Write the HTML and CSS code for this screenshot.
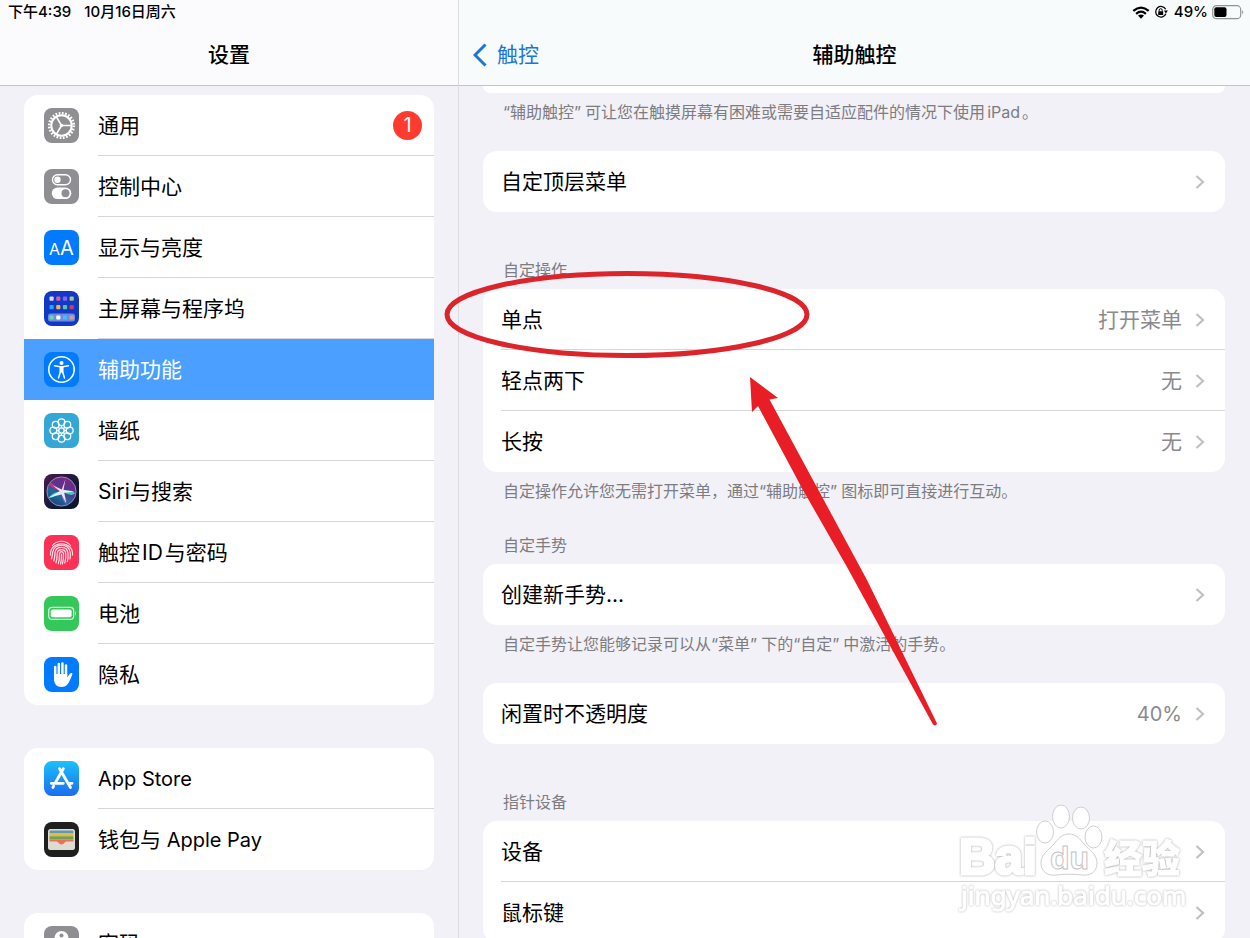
FILE: index.html
```html
<!DOCTYPE html>
<html lang="zh-CN">
<head>
<meta charset="utf-8">
<meta name="viewport" content="width=device-width, initial-scale=1">
<title>设置</title>
<link rel="stylesheet" href="styles.css">
</head>
<body>
<svg class="defs" aria-hidden="true">
  <symbol id="chevron" viewBox="0 0 10 16"><path d="M1.500 2 8 8l-6.500 6" fill="none" stroke="currentColor" stroke-width="2.200"/></symbol>
</svg>
<div class="app">
  <aside class="sidebar">
    <header class="bar">
      <div class="status"><span>下午4:39</span><span>10月16日周六</span></div>
      <div class="titlebar"><h1 class="title">设置</h1></div>
    </header>
    <nav class="side-scroll">
      <ul class="card">
        <li><a class="item" href="#"><svg class="icon" viewBox="0 0 35 35"><rect width="35" height="35" rx="8" fill="#8e8e93"/><g fill="none" stroke="#fff"><circle cx="17.500" cy="17.500" r="12.300" stroke-width="2.600" stroke-dasharray="1.720 1.500"/><circle cx="17.500" cy="17.500" r="10.200" stroke-width="2"/><path d="M17.500 17.500H27M17.500 17.500 12.500 9M17.500 17.500 12.500 26" stroke-width="1.500"/></g><circle cx="17.500" cy="17.500" r="1.800" fill="#fff"/></svg><span class="label">通用</span><span class="badge">1</span></a></li>
        <li><a class="item" href="#"><svg class="icon" viewBox="0 0 35 35"><rect width="35" height="35" rx="8" fill="#8e8e93"/><rect x="8.500" y="5.700" width="18" height="10" rx="5" fill="none" stroke="#fff" stroke-width="1.400"/><circle cx="13.500" cy="10.700" r="3.200" fill="#fff"/><rect x="7.800" y="18.600" width="19.500" height="11.500" rx="5.750" fill="#fff"/><circle cx="21.500" cy="24.300" r="4" fill="#8e8e93"/></svg><span class="label">控制中心</span></a></li>
        <li><a class="item" href="#"><svg class="icon" viewBox="0 0 35 35"><rect width="35" height="35" rx="8" fill="#007aff"/><text x="5" y="25" class="aa-small">A</text><text x="16" y="25" class="aa-large">A</text></svg><span class="label">显示与亮度</span></a></li>
        <li><a class="item" href="#"><svg class="icon" viewBox="0 0 35 35"><rect width="35" height="35" rx="8" fill="#1238c8"/><rect x="4" y="22.500" width="27" height="8" rx="2.500" fill="#6e8ce0"/><g><rect x="5.500" y="5.500" width="4.200" height="4.200" rx="1" fill="#dcdcf5"/><rect x="12.200" y="5.500" width="4.200" height="4.200" rx="1" fill="#e05a94"/><rect x="18.900" y="5.500" width="4.200" height="4.200" rx="1" fill="#8a62f0"/><rect x="25.600" y="5.500" width="4.200" height="4.200" rx="1" fill="#a6c77e"/><rect x="5.500" y="14" width="4.200" height="4.200" rx="1" fill="#20a8f5"/><rect x="12.200" y="14" width="4.200" height="4.200" rx="1" fill="#f2b53a"/><rect x="18.900" y="14" width="4.200" height="4.200" rx="1" fill="#4ec6ad"/><rect x="25.600" y="14" width="4.200" height="4.200" rx="1" fill="#d93a55"/><rect x="5.500" y="24.400" width="4.200" height="4.200" rx="1" fill="#65dca2"/><rect x="12.200" y="24.400" width="4.200" height="4.200" rx="1" fill="#fff"/><rect x="18.900" y="24.400" width="4.200" height="4.200" rx="1" fill="#45bdf5"/><rect x="25.600" y="24.400" width="4.200" height="4.200" rx="1" fill="#dc9c8e"/></g></svg><span class="label">主屏幕与程序坞</span></a></li>
        <li><a class="item item-active" href="#" aria-current="page"><svg class="icon" viewBox="0 0 35 35"><rect width="35" height="35" rx="8" fill="#007aff"/><circle cx="17.500" cy="17.500" r="12.700" fill="none" stroke="#fff" stroke-width="1.600"/><circle cx="17.500" cy="11" r="2" fill="#fff"/><path d="M10.500 13.700 17.500 14.900 24.500 13.700M16.500 19.500 14.500 26M18.500 19.500 20.500 26" fill="none" stroke="#fff" stroke-width="1.500" stroke-linecap="round"/><path d="M15.500 14.500h4v6h-4z" fill="#fff"/></svg><span class="label">辅助功能</span></a></li>
        <li><a class="item" href="#"><svg class="icon" viewBox="0 0 35 35"><rect width="35" height="35" rx="8" fill="#35a7d7"/><g fill="none" stroke="#fff" stroke-width="1.300"><circle cx="17.500" cy="17.500" r="2.700"/><circle cx="17.500" cy="9.300" r="3.400"/><circle cx="23.300" cy="11.700" r="3.400"/><circle cx="25.700" cy="17.500" r="3.400"/><circle cx="23.300" cy="23.300" r="3.400"/><circle cx="17.500" cy="25.700" r="3.400"/><circle cx="11.700" cy="23.300" r="3.400"/><circle cx="9.300" cy="17.500" r="3.400"/><circle cx="11.700" cy="11.700" r="3.400"/><path d="M17.500 12.700v2.100M17.500 20.200v2.100M12.700 17.500h2.100M20.200 17.500h2.100M14.100 14.100l1.500 1.500M19.400 19.400l1.500 1.500M20.900 14.100l-1.500 1.500M15.600 19.400l-1.500 1.500"/></g></svg><span class="label">墙纸</span></a></li>
        <li><a class="item" href="#"><svg class="icon" viewBox="0 0 35 35"><defs><linearGradient id="siri-bg" x2="1" y2="1"><stop offset="0" stop-color="#4c1a4e"/><stop offset=".5" stop-color="#191b3c"/><stop offset="1" stop-color="#0b1030"/></linearGradient><linearGradient id="siri-orb" x1=".8" y1="0" x2=".2" y2="1"><stop offset="0" stop-color="#8a2080"/><stop offset=".4" stop-color="#57348f"/><stop offset=".65" stop-color="#1f6a9c"/><stop offset="1" stop-color="#183f72"/></linearGradient></defs><rect width="35" height="35" rx="8" fill="url(#siri-bg)"/><circle cx="17.500" cy="17.500" r="14.600" fill="url(#siri-orb)" stroke="#a9a4c8" stroke-width=".8"/><path d="M17.500 17.500C9 9 6 7 5 10c2 4 8 6 12.500 7.500z" fill="#e52e6c" opacity=".8"/><path d="M18 17c7-1 11-1 13 2-3 4-8 1-13-2z" fill="#41c9bb"/><path d="M17 17.500C9 18 6 22 4.500 24 9 24 13 21 17 17.500z" fill="#47d8e4"/><path d="M18 17c4 6 5 9 4.500 13-4-2-5-8-4.500-13z" fill="#8a5fd6"/><path d="M21.500 5 19.500 15.800 30 17.800 20.300 18.800 22 29 17.500 20.500 5 23.500 15.800 17.200 9 11.500 17.800 15.500z" fill="#fff" opacity=".85"/></svg><span class="label">Siri与搜索</span></a></li>
        <li><a class="item" href="#"><svg class="icon" viewBox="0 0 35 35"><rect width="35" height="35" rx="8" fill="#fc3158"/><g fill="none" stroke="#ffe4e9" stroke-width="1.200" stroke-linecap="round"><path d="M8.500 10.500C13 4.800 22 4.800 26.500 10.500"/><path d="M6.500 20C5.500 5 29.500 5 28.500 20"/><path d="M7.500 24C8 21 8.500 20 8.600 17.500 9.500 7.500 25.500 7.500 26.300 18 26.400 20 26.400 22 26 24"/><path d="M9.800 26C11 22 10.800 20 11 17.500 12 10.500 23 10.500 24 18 24.200 21 24 24 23.400 26.500"/><path d="M12 27.700C13.300 24 13 21 13.300 18 14 13.500 21 13.500 21.700 18 22 22 21.700 25 20.800 28"/><path d="M14.300 28.600C15.600 25 15.400 22 15.500 18.500 16 16 19 16 19.500 18.500 19.700 22 19.400 26 18.400 29"/><path d="M17.500 19C17.600 23 17.500 26 16.500 29"/></g></svg><span class="label">触控<span class="inline-latin">ID</span>与密码</span></a></li>
        <li><a class="item" href="#"><svg class="icon" viewBox="0 0 35 35"><rect width="35" height="35" rx="8" fill="#34c759"/><rect x="4.700" y="11.400" width="25" height="12" rx="3.500" fill="none" stroke="#d8f5df" stroke-width="1.200"/><rect x="6.800" y="13.500" width="20.800" height="7.800" rx="1.800" fill="#fff"/><path d="M31 15.300q2 2.100 0 4.200z" fill="#d8f5df"/></svg><span class="label">电池</span></a></li>
        <li><a class="item" href="#"><svg class="icon" viewBox="0 0 35 35"><rect width="35" height="35" rx="8" fill="#007aff"/><g fill="none" stroke="#fff" stroke-width="2.500" stroke-linecap="round"><path d="M11.200 20V10M14.800 18V7M18.400 18V6.500M22 19V8.500"/></g><path d="M10 17h13.200v3.500c1.200-1.300 2-3.500 3.400-4.200 1-.6 2.200 0 1.700 1.200-1.200 3-2.300 6-3.800 8.600-2 3-4.300 4-7 4-5 0-7.500-3.300-7.500-8z" fill="#fff"/></svg><span class="label">隐私</span></a></li>
      </ul>
      <ul class="card">
        <li><a class="item" href="#"><svg class="icon" viewBox="0 0 35 35"><defs><linearGradient id="store-bg" x2="0" y2="1"><stop offset="0" stop-color="#1cc1fa"/><stop offset="1" stop-color="#1b6cf0"/></linearGradient></defs><rect width="35" height="35" rx="8" fill="url(#store-bg)"/><g fill="none" stroke="#fff" stroke-width="2.800" stroke-linecap="round"><path d="M19.300 7.800 11.500 21.500M15.600 7.800 26.500 26.500M7.300 22.300h12M25 22.300h3M9.600 25.200 8.900 26.500"/></g></svg><span class="label"><span class="latin">App Store</span></span></a></li>
        <li><a class="item" href="#"><svg class="icon" viewBox="0 0 35 35"><rect width="35" height="35" rx="8" fill="#1f1f20"/><rect x="4" y="7" width="27" height="21" rx="2.500" fill="#dedbd2"/><path d="M5.500 11V9.800q0-1.300 1.500-1.300h21q1.500 0 1.500 1.300V11z" fill="#5b99b4"/><path d="M5.500 11h24v3.200h-24z" fill="#edb73a"/><path d="M5.500 14.200h24v3.300h-24z" fill="#72a348"/><path d="M5.500 17.500h24v2h-7c-2 0-2.200 3-5 3s-3-3-5-3h-7z" fill="#e9705f"/></svg><span class="label">钱包与<span class="latin"> Apple Pay</span></span></a></li>
      </ul>
      <ul class="card">
        <li><a class="item" href="#"><svg class="icon" viewBox="0 0 35 35"><rect width="35" height="35" rx="8" fill="#8e8e93"/><circle cx="17.500" cy="12" r="7" fill="#fff"/><circle cx="17.500" cy="9.500" r="2" fill="#8e8e93"/><path d="M15 17h5v9l-2.500 3-2.500-3z" fill="#fff"/></svg><span class="label">密码</span></a></li>
      </ul>
    </nav>
  </aside>

  <main class="detail">
    <header class="bar bar-detail">
      <div class="status status-right">
        <svg class="wifi" viewBox="0 0 18 13"><g fill="none" stroke="#000" stroke-width="2.200"><path d="M1.300 4.900Q9-1.800 16.700 4.900M4.100 7.800Q9 3.600 13.900 7.800"/></g><path d="M6 9.600Q9 7.200 12 9.600L9 12.700z"/></svg>
        <svg class="lock" viewBox="0 0 14 14"><path d="M11.900 8.800A5.300 5.300 0 1 1 11.700 4.300" fill="none" stroke="#000" stroke-width="1.300"/><path d="M9.900 5.500h4l-2 3z"/><rect x="4.200" y="6.200" width="5" height="3.800" rx=".6"/><path d="M5.200 6.500V5.200a1.500 1.500 0 0 1 3 0v1.300" fill="none" stroke="#000"/></svg>
        <span>49%</span>
        <svg class="battery" viewBox="0 0 32 15"><rect x=".7" y=".7" width="28" height="13" rx="3.800" fill="none" stroke="#929493" stroke-width="1.200"/><rect x="2.300" y="2.300" width="12.200" height="9.800" rx="2"/><path d="M30.200 5q2 2.200 0 4.400z" fill="#929493"/></svg>
      </div>
      <div class="titlebar">
        <a class="back" href="#"><svg class="back-arrow" viewBox="0 0 14 24"><path d="M12.500 1.500 2 12l10.500 10.500" fill="none" stroke="currentColor" stroke-width="3"/></svg>触控</a>
        <h2 class="title">辅助触控</h2>
      </div>
    </header>
    <div class="detail-scroll">
      <div class="card card-tail"></div>
      <p class="note"><span class="term">“辅助触控”</span>可让您在触摸屏幕有困难或需要自适应配件的情况下使用<span class="inline-latin">iPad</span>。</p>

      <ul class="card">
        <li><a class="row" href="#"><span class="label">自定顶层菜单</span><svg class="chevron"><use href="#chevron"/></svg></a></li>
      </ul>

      <h3 class="caption caption-far">自定操作</h3>
      <ul class="card">
        <li><a class="row" href="#"><span class="label">单点</span><span class="value">打开菜单</span><svg class="chevron"><use href="#chevron"/></svg></a></li>
        <li><a class="row" href="#"><span class="label">轻点两下</span><span class="value">无</span><svg class="chevron"><use href="#chevron"/></svg></a></li>
        <li><a class="row" href="#"><span class="label">长按</span><span class="value">无</span><svg class="chevron"><use href="#chevron"/></svg></a></li>
      </ul>
      <p class="note">自定操作允许您无需打开菜单，通过<span class="term">“辅助触控”</span>图标即可直接进行互动。</p>

      <h3 class="caption">自定手势</h3>
      <ul class="card">
        <li><a class="row" href="#"><span class="label">创建新手势...</span><svg class="chevron"><use href="#chevron"/></svg></a></li>
      </ul>
      <p class="note">自定手势让您能够记录可以从<span class="term">“菜单”</span>下的<span class="term">“自定”</span>中激活的手势。</p>

      <ul class="card">
        <li><a class="row" href="#"><span class="label">闲置时不透明度</span><span class="value latin">40%</span><svg class="chevron"><use href="#chevron"/></svg></a></li>
      </ul>

      <h3 class="caption caption-far">指针设备</h3>
      <ul class="card">
        <li><a class="row" href="#"><span class="label">设备</span><svg class="chevron"><use href="#chevron"/></svg></a></li>
        <li><a class="row" href="#"><span class="label">鼠标键</span><svg class="chevron"><use href="#chevron"/></svg></a></li>
      </ul>
    </div>
  </main>

  <svg class="markup" viewBox="0 0 1250 938">
    <g class="watermark">
      <path class="wm-shape" d="M1069 834c7 0 11 5 15 10 5 6 13 10 13 19 0 10-8 13-15 12-8-1-18-1-26 0-8 1-15-3-15-12 0-9 8-13 13-19 4-5 8-10 15-10z"/>
      <ellipse class="wm-shape" cx="1045" cy="832" rx="8.500" ry="11"/>
      <ellipse class="wm-shape" cx="1061" cy="816.500" rx="8.500" ry="11.500"/>
      <ellipse class="wm-shape" cx="1081" cy="818" rx="8.500" ry="11"/>
      <ellipse class="wm-shape" cx="1093.500" cy="837" rx="8.500" ry="11"/>
      <text x="959" y="874" class="wm-bai">Bai</text>
      <text x="1050" y="869" class="wm-du">du</text>
      <text x="1104" y="872" class="wm-cn">经验</text>
      <text x="961" y="905" class="wm-url">jingyan.baidu.com</text>
    </g>
    <ellipse cx="627" cy="314.500" rx="180" ry="41" fill="none" stroke="#dc242b" stroke-width="5"/>
    <path d="M750 377 778 398 769.500 399.500 820 493 867 580 937 723.500Q936 727 933 724.500L847 567 803 490 758 406 752 412z" fill="#e91d25"/>
  </svg>
</div>
</body>
</html>
```

FILE: styles.css
```css
* {
  box-sizing: border-box;
}

body {
  margin: 0;
  background: #f2f1f7;
  color: #000;
  font-family: Inter, "Noto Sans CJK SC", sans-serif;
  font-size: 21px;
}

ul,
p,
h1,
h2,
h3 {
  margin: 0;
  padding: 0;
  list-style: none;
}

a {
  color: inherit;
  text-decoration: none;
}

.defs {
  display: none;
}

.app {
  position: relative;
  display: grid;
  grid-template-columns: 458px 1fr;
  height: 100vh;
  overflow: hidden;
}

.sidebar,
.detail {
  display: flex;
  flex-direction: column;
  min-width: 0;
  min-height: 0;
}

.detail {
  border-left: 1px solid #dddde1;
}

.bar {
  flex: none;
  background: #fbfbfd;
  border-bottom: 1px solid #c4c4c7;
}

.bar-detail {
  background: #f8fbfb;
}

.status {
  display: flex;
  align-items: center;
  gap: 13px;
  height: 24px;
  padding: 0 8px;
  font-size: 15px;
  font-weight: 500;
  line-height: 24px;
}

.status-right {
  justify-content: flex-end;
  gap: 4px;
  padding: 0 6px;
}

.wifi {
  width: 18px;
  height: 13px;
}

.lock {
  width: 14px;
  height: 14px;
  margin-right: 2px;
}

.battery {
  width: 32px;
  height: 15px;
}

.titlebar {
  position: relative;
  display: flex;
  align-items: center;
  justify-content: center;
  height: 61px;
}

.title {
  font-size: 21px;
  font-weight: 500;
  line-height: 32px;
}

.back {
  position: absolute;
  left: 14px;
  display: flex;
  align-items: center;
  gap: 10px;
  color: #1877d8;
  line-height: 32px;
}

.back-arrow {
  width: 14px;
  height: 24px;
}

.side-scroll {
  display: flex;
  flex-direction: column;
  gap: 43px;
  padding: 9px 24px 0;
  min-height: 0;
  overflow: hidden;
}

.detail-scroll {
  padding: 0 25px 0 24px;
  min-height: 0;
  overflow: hidden;
}

.card {
  flex: none;
  overflow: hidden;
  background: #fff;
  border-radius: 14px;
}

.card-tail {
  height: 7px;
  border-radius: 0 0 14px 14px;
}

.item,
.row {
  position: relative;
  display: flex;
  align-items: center;
  height: 61px;
  line-height: 32px;
}

.item {
  gap: 19px;
  padding: 0 12px 0 20px;
}

.row {
  gap: 13px;
  padding: 0 20px 0 18px;
}

li:not(:last-child) > a::after {
  content: "";
  position: absolute;
  right: 0;
  bottom: 0;
  left: 18px;
  height: 1px;
  background: #d6d6d9;
}

li:not(:last-child) > .item::after {
  left: 74px;
}

.item-active {
  background: #4a9fff;
  color: #fff;
}

li:not(:last-child) > .item-active::after {
  background: transparent;
}

.icon {
  flex: none;
  width: 35px;
  height: 35px;
}

.aa-small,
.aa-large {
  fill: #fff;
  font-size: 16px;
}

.aa-large {
  font-size: 20px;
}

.label {
  flex: 1;
  white-space: nowrap;
}

.latin {
  font-size: 20px;
}

.inline-latin {
  margin: 0 2px;
}

.term {
  margin-right: 4px;
}

.badge {
  width: 29px;
  height: 29px;
  border-radius: 50%;
  background: #ff3b30;
  color: #fff;
  font-size: 20px;
  line-height: 29px;
  text-align: center;
}

.value {
  color: #8a8a8e;
}

.chevron {
  flex: none;
  width: 10px;
  height: 16px;
  color: #c0c0c3;
}

.note,
.caption {
  padding: 0 20px;
  color: #7c7c81;
  font-size: 16px;
  font-weight: 400;
  line-height: 24px;
}

.note {
  padding-top: 7px;
  padding-bottom: 27px;
}

.caption {
  padding-bottom: 7px;
}

.note + .caption {
  margin-top: -21px;
  padding-top: 24px;
}

.caption-far {
  padding-top: 46px;
}

.markup {
  position: absolute;
  top: 0;
  left: 0;
  width: 1250px;
  height: 938px;
  pointer-events: none;
}

.watermark {
  fill: #fff;
  stroke: #fff;
  stroke-width: 1px;
}

.wm-shape {
  stroke: #cfcfd2;
}

.wm-bai {
  font: bold 50px "Liberation Sans", sans-serif;
  stroke-width: 3px;
  filter: drop-shadow(0 0 1px #a8a8ac);
}

.wm-du {
  font: bold 32px "Liberation Sans", sans-serif;
  stroke: #c4c4c8;
}

.wm-cn {
  font: 900 38px "Noto Sans CJK SC", sans-serif;
  filter: drop-shadow(0 0 1px #a8a8ac);
}

.wm-url {
  font: 26px "Noto Sans", sans-serif;
  filter: drop-shadow(0 0 1px #b4b4b8);
}
```
